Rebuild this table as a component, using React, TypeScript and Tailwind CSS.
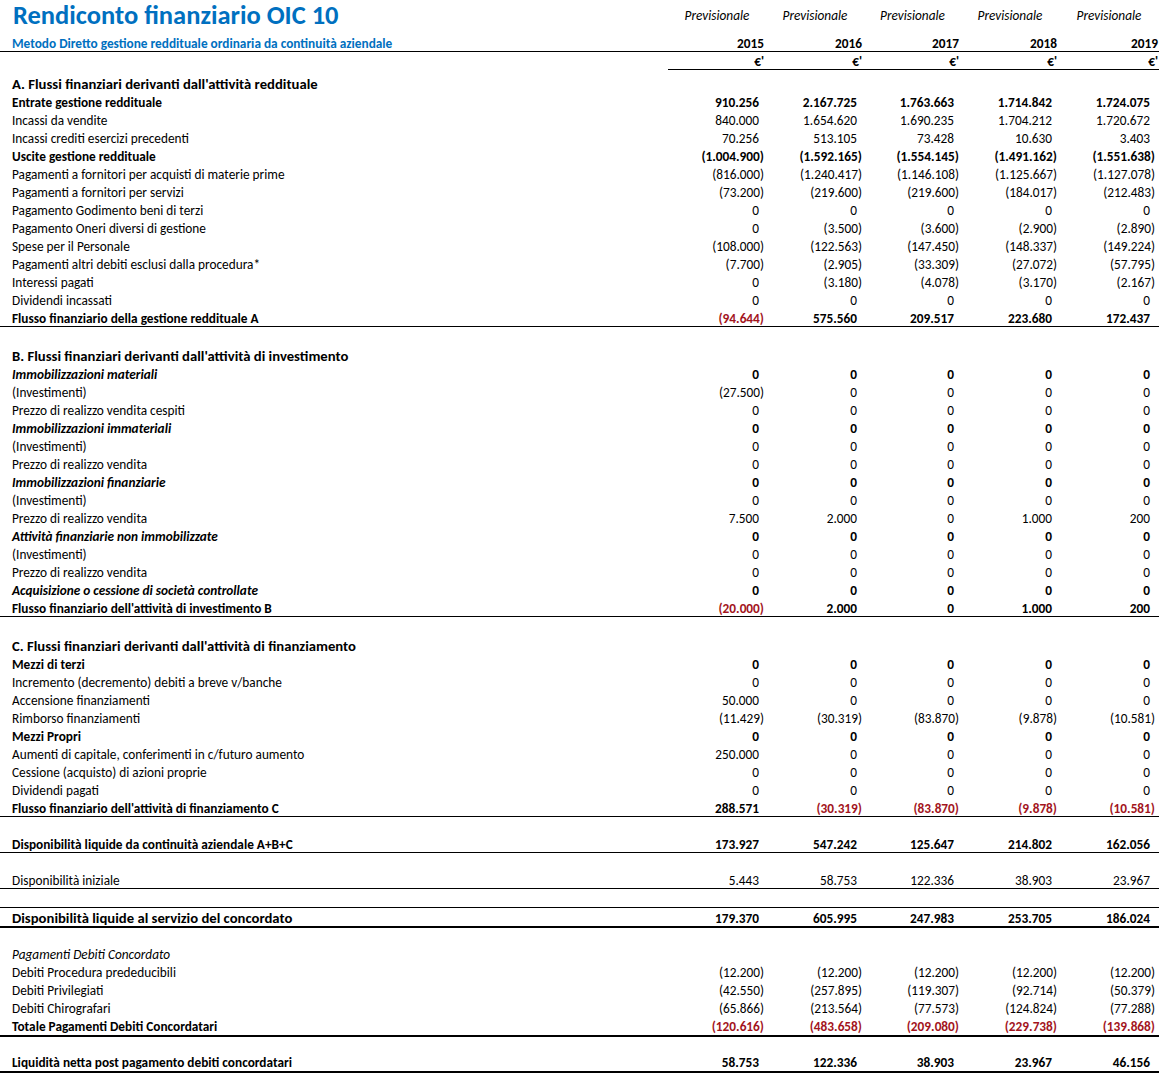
import React from "react";

type Kind = "n" | "b" | "bi" | "i" | "sec" | "big";
type Row = {
  label: string;
  vals?: string[];
  kind: Kind;
  line?: "thin" | "thick" | "big";
  red?: boolean;
};

const Z = ["0", "0", "0", "0", "0"];

const rowsA: Row[] = [
  { label: "Entrate gestione reddituale", kind: "b", vals: ["910.256", "2.167.725", "1.763.663", "1.714.842", "1.724.075"] },
  { label: "Incassi da vendite", kind: "n", vals: ["840.000", "1.654.620", "1.690.235", "1.704.212", "1.720.672"] },
  { label: "Incassi crediti esercizi precedenti", kind: "n", vals: ["70.256", "513.105", "73.428", "10.630", "3.403"] },
  { label: "Uscite gestione reddituale", kind: "b", vals: ["(1.004.900)", "(1.592.165)", "(1.554.145)", "(1.491.162)", "(1.551.638)"] },
  { label: "Pagamenti a fornitori per acquisti di materie prime", kind: "n", vals: ["(816.000)", "(1.240.417)", "(1.146.108)", "(1.125.667)", "(1.127.078)"] },
  { label: "Pagamenti a fornitori per servizi", kind: "n", vals: ["(73.200)", "(219.600)", "(219.600)", "(184.017)", "(212.483)"] },
  { label: "Pagamento Godimento beni di terzi", kind: "n", vals: Z },
  { label: "Pagamento Oneri diversi di gestione", kind: "n", vals: ["0", "(3.500)", "(3.600)", "(2.900)", "(2.890)"] },
  { label: "Spese per il Personale", kind: "n", vals: ["(108.000)", "(122.563)", "(147.450)", "(148.337)", "(149.224)"] },
  { label: "Pagamenti altri debiti esclusi dalla procedura*", kind: "n", vals: ["(7.700)", "(2.905)", "(33.309)", "(27.072)", "(57.795)"] },
  { label: "Interessi pagati", kind: "n", vals: ["0", "(3.180)", "(4.078)", "(3.170)", "(2.167)"] },
  { label: "Dividendi incassati", kind: "n", vals: Z },
  { label: "Flusso finanziario della gestione reddituale A", kind: "b", line: "thin", red: true, vals: ["(94.644)", "575.560", "209.517", "223.680", "172.437"] },
];

const rowsB: Row[] = [
  { label: "Immobilizzazioni materiali", kind: "bi", vals: Z },
  { label: "(Investimenti)", kind: "n", vals: ["(27.500)", "0", "0", "0", "0"] },
  { label: "Prezzo di realizzo vendita cespiti", kind: "n", vals: Z },
  { label: "Immobilizzazioni immateriali", kind: "bi", vals: Z },
  { label: "(Investimenti)", kind: "n", vals: Z },
  { label: "Prezzo di realizzo vendita", kind: "n", vals: Z },
  { label: "Immobilizzazioni finanziarie", kind: "bi", vals: Z },
  { label: "(Investimenti)", kind: "n", vals: Z },
  { label: "Prezzo di realizzo vendita", kind: "n", vals: ["7.500", "2.000", "0", "1.000", "200"] },
  { label: "Attività finanziarie non immobilizzate", kind: "bi", vals: Z },
  { label: "(Investimenti)", kind: "n", vals: Z },
  { label: "Prezzo di realizzo vendita", kind: "n", vals: Z },
  { label: "Acquisizione o cessione di società controllate", kind: "bi", vals: Z },
  { label: "Flusso finanziario dell'attività di investimento B", kind: "b", line: "thin", red: true, vals: ["(20.000)", "2.000", "0", "1.000", "200"] },
];

const rowsC: Row[] = [
  { label: "Mezzi di terzi", kind: "b", vals: Z },
  { label: "Incremento (decremento) debiti a breve v/banche", kind: "n", vals: Z },
  { label: "Accensione finanziamenti", kind: "n", vals: ["50.000", "0", "0", "0", "0"] },
  { label: "Rimborso finanziamenti", kind: "n", vals: ["(11.429)", "(30.319)", "(83.870)", "(9.878)", "(10.581)"] },
  { label: "Mezzi Propri", kind: "b", vals: Z },
  { label: "Aumenti di capitale, conferimenti in c/futuro aumento", kind: "n", vals: ["250.000", "0", "0", "0", "0"] },
  { label: "Cessione (acquisto) di azioni proprie", kind: "n", vals: Z },
  { label: "Dividendi pagati", kind: "n", vals: Z },
  { label: "Flusso finanziario dell'attività di finanziamento C", kind: "b", line: "thin", red: true, vals: ["288.571", "(30.319)", "(83.870)", "(9.878)", "(10.581)"] },
];

const GRID = "grid grid-cols-[668px_98px_98px_97px_98px_100px] w-[1159px]";
const negPad = ["pr-[2px]", "pr-[2px]", "pr-[2px]", "pr-[2px]", "pr-[4px]"];
const posPad = ["pr-[7px]", "pr-[7px]", "pr-[7px]", "pr-[7px]", "pr-[9px]"];
const hdrPad = ["pr-[2px]", "pr-[2px]", "pr-[2px]", "pr-[2px]", "pr-[1px]"];

function labelClass(kind: Kind) {
  switch (kind) {
    case "b":
      return "font-bold text-[13.3px]";
    case "bi":
      return "font-bold italic text-[13.3px]";
    case "i":
      return "italic text-[13.3px]";
    case "sec":
    case "big":
      return "font-bold text-[14.7px]";
    default:
      return "text-[13.3px]";
  }
}

function TableRow({ r }: { r: Row }) {
  const bold = r.kind === "b" || r.kind === "bi" || r.kind === "big";
  const lineCls =
    r.line === "thin"
      ? "h-[18px] pt-[2px] border-b border-black"
      : r.line === "thick"
      ? "h-[20px] pt-[2px] border-b-2 border-black"
      : r.line === "big"
      ? "h-[21px] pt-[3px] border-t border-b-2 border-black"
      : "h-[18px] pt-[2px]";
  return (
    <div className={`${GRID} ${lineCls} items-center`}>
      <div className={`pl-[12px] whitespace-nowrap ${labelClass(r.kind)}`}>{r.label}</div>
      {(r.vals ?? ["", "", "", "", ""]).map((v, i) => {
        const neg = v.startsWith("(");
        const red = r.red && neg;
        return (
          <div
            key={i}
            className={`text-right text-[13.3px] whitespace-nowrap ${neg ? negPad[i] : posPad[i]} ${bold ? "font-bold" : ""} ${red ? "text-[#a3151d]" : "text-black"}`}
          >
            {v}
          </div>
        );
      })}
    </div>
  );
}

function Section({ title }: { title: string }) {
  return (
    <div className={`${GRID} h-[20px] items-center pt-[2px]`}>
      <div className="pl-[12px] whitespace-nowrap font-bold text-[14.7px]">{title}</div>
    </div>
  );
}

export default function App() {
  const years = ["2015", "2016", "2017", "2018", "2019"];
  return (
    <div className="font-['Carlito','Calibri','Lato',sans-serif] text-black bg-white w-[1170px] min-h-[1083px] leading-none">
      {/* title row */}
      <div className={`${GRID} h-[34px] items-center`}>
        <div className="pl-[13px] pb-[3px] whitespace-nowrap font-bold text-[26.5px] text-[#0070c0]">
          Rendiconto finanziario OIC 10
        </div>
        {years.map((y) => (
          <div key={y} className="text-center italic text-[13.3px] pb-[2px]">
            Previsionale
          </div>
        ))}
      </div>
      {/* subtitle / years */}
      <div className={`${GRID} h-[18px] pt-[2px] items-center border-b border-black`}>
        <div className="pl-[12px] whitespace-nowrap font-bold text-[13.3px] text-[#0070c0]">
          Metodo Diretto gestione reddituale ordinaria da continuità aziendale
        </div>
        {years.map((y, i) => (
          <div key={y} className={`text-right font-bold text-[13.3px] ${hdrPad[i]}`}>
            {y}
          </div>
        ))}
      </div>
      {/* currency */}
      <div className={`${GRID} h-[18px] items-stretch`}>
        <div />
        {years.map((y, i) => (
          <div key={y} className={`flex items-center justify-end pt-[2px] border-b border-black font-bold text-[13.3px] ${hdrPad[i]}`}>
            €'
          </div>
        ))}
      </div>
      <div className="h-[3px]" />
      <Section title="A. Flussi finanziari derivanti dall'attività reddituale" />
      {rowsA.map((r, i) => (
        <TableRow key={"a" + i} r={r} />
      ))}
      <div className="h-[18px]" />
      <Section title="B. Flussi finanziari derivanti dall'attività di investimento" />
      {rowsB.map((r, i) => (
        <TableRow key={"b" + i} r={r} />
      ))}
      <div className="h-[18px]" />
      <Section title="C. Flussi finanziari derivanti dall'attività di finanziamento" />
      {rowsC.map((r, i) => (
        <TableRow key={"c" + i} r={r} />
      ))}
      <div className="h-[18px]" />
      <TableRow
        r={{ label: "Disponibilità liquide da continuità aziendale A+B+C", kind: "b", line: "thin", vals: ["173.927", "547.242", "125.647", "214.802", "162.056"] }}
      />
      <div className="h-[18px]" />
      <TableRow r={{ label: "Disponibilità iniziale", kind: "n", line: "thin", vals: ["5.443", "58.753", "122.336", "38.903", "23.967"] }} />
      <div className="h-[18px]" />
      <TableRow
        r={{ label: "Disponibilità liquide al servizio del concordato", kind: "big", line: "big", vals: ["179.370", "605.995", "247.983", "253.705", "186.024"] }}
      />
      <div className="h-[17px]" />
      <TableRow r={{ label: "Pagamenti Debiti Concordato", kind: "i" }} />
      <TableRow r={{ label: "Debiti Procedura prededucibili", kind: "n", vals: ["(12.200)", "(12.200)", "(12.200)", "(12.200)", "(12.200)"] }} />
      <TableRow r={{ label: "Debiti Privilegiati", kind: "n", vals: ["(42.550)", "(257.895)", "(119.307)", "(92.714)", "(50.379)"] }} />
      <TableRow r={{ label: "Debiti Chirografari", kind: "n", vals: ["(65.866)", "(213.564)", "(77.573)", "(124.824)", "(77.288)"] }} />
      <TableRow
        r={{ label: "Totale Pagamenti Debiti Concordatari", kind: "b", line: "thick", red: true, vals: ["(120.616)", "(483.658)", "(209.080)", "(229.738)", "(139.868)"] }}
      />
      <div className="h-[16px]" />
      <TableRow
        r={{ label: "Liquidità netta post pagamento debiti concordatari", kind: "b", line: "thick", vals: ["58.753", "122.336", "38.903", "23.967", "46.156"] }}
      />
    </div>
  );
}
